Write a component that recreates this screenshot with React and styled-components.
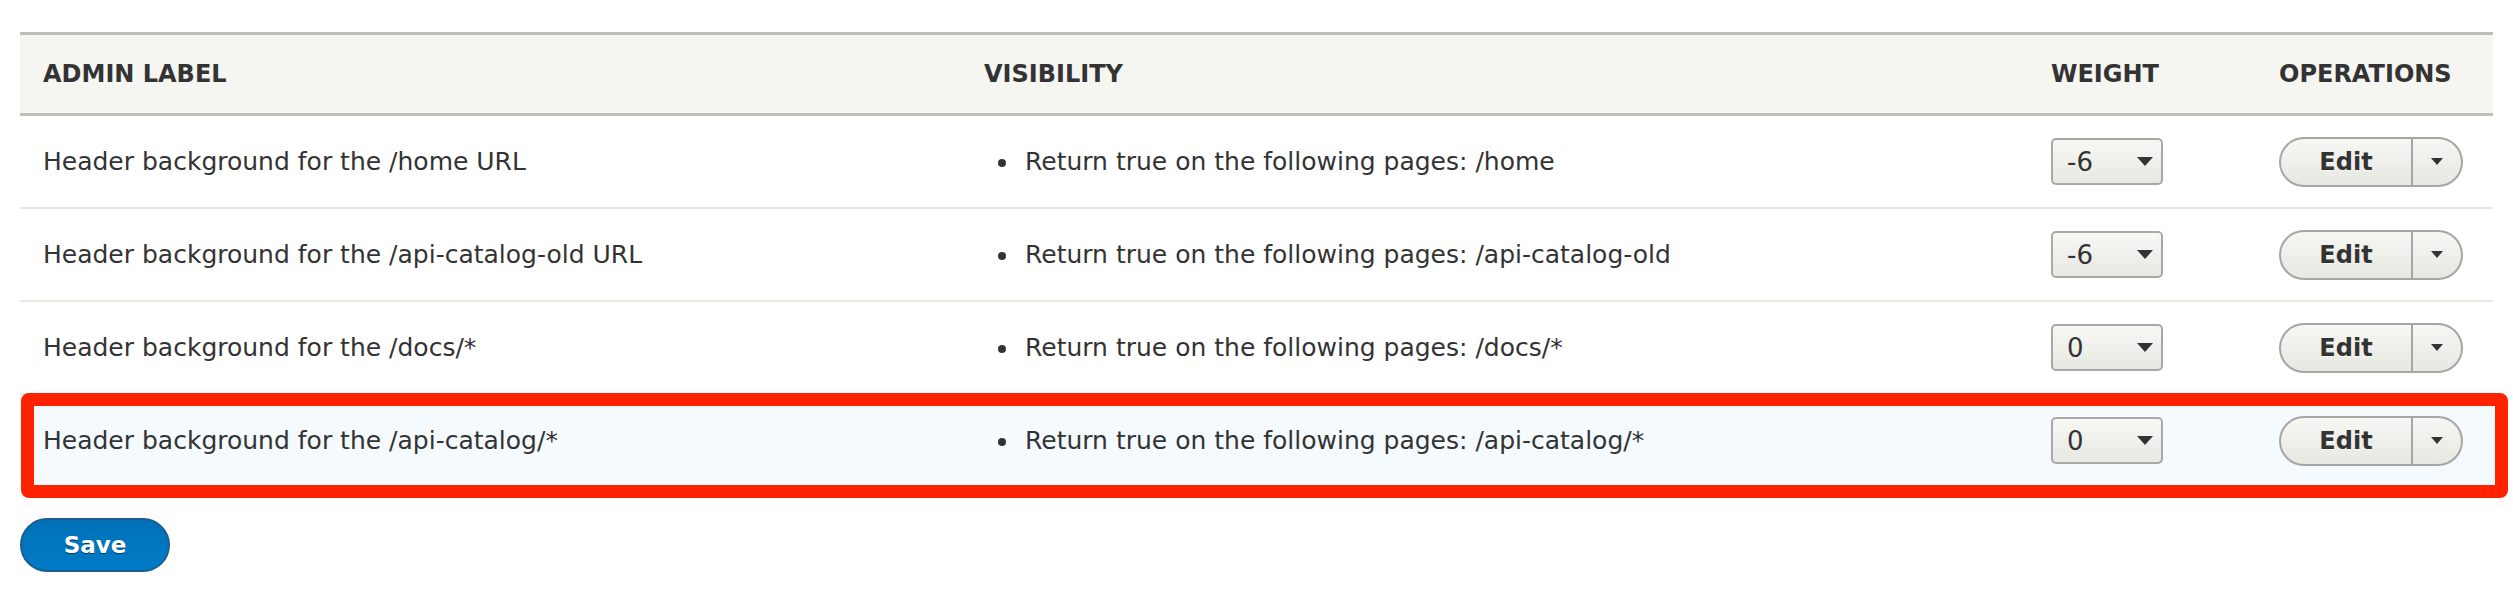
import React from "react";
import styled, { createGlobalStyle } from "styled-components";

const GlobalStyle = createGlobalStyle`
  html, body {
    margin: 0;
    padding: 0;
    background: #ffffff;
  }
  body {
    font-family: "DejaVu Sans", "Liberation Sans", sans-serif;
    color: #2f2f2f;
  }
`;

const Page = styled.div`
  padding: 32px 20px 0 20px;
`;

const Table = styled.div`
  width: 100%;
`;

const columns = "941px 1067px 228px 1fr";

const HeaderRow = styled.div`
  display: grid;
  grid-template-columns: ${columns};
  align-items: center;
  height: 78px;
  background: #f5f5f2;
  border-top: 3px solid #bfbfba;
  border-bottom: 3px solid #bfbfba;
`;

const HeaderCell = styled.div`
  padding-left: 23px;
  font-size: 24px;
  font-weight: bold;
  text-transform: uppercase;
  color: #333333;
`;

const Row = styled.div`
  position: relative;
  display: grid;
  grid-template-columns: ${columns};
  align-items: center;
  height: 91px;
  border-bottom: 2px solid #e8e7e2;
  background: ${(props) => (props.$highlight ? "#f5fafe" : "#ffffff")};
`;

const Cell = styled.div`
  padding-left: 23px;
  font-size: 25px;
  color: #333333;
`;

const Bullet = styled.div`
  position: relative;
  padding-left: 41px;

  &::before {
    content: "";
    position: absolute;
    left: 14px;
    top: 50%;
    width: 8px;
    height: 8px;
    margin-top: -3px;
    border-radius: 50%;
    background: #333333;
  }
`;

const Select = styled.div`
  box-sizing: border-box;
  display: flex;
  align-items: center;
  justify-content: space-between;
  width: 112px;
  height: 47px;
  padding: 0 8px 0 14px;
  border: 2px solid #a8a8a8;
  border-radius: 5px;
  background: linear-gradient(to bottom, #f7f7f4, #e8e8e3);
  font-size: 26px;
  color: #333333;
`;

const Caret = styled.span`
  width: 0;
  height: 0;
  border-left: ${(props) => props.$size}px solid transparent;
  border-right: ${(props) => props.$size}px solid transparent;
  border-top: ${(props) => Math.round(props.$size * 1.1)}px solid #333333;
`;

const SplitButton = styled.div`
  box-sizing: border-box;
  display: flex;
  width: 184px;
  height: 50px;
  border: 2px solid #a6a6a6;
  border-radius: 26px;
  overflow: hidden;
  background: linear-gradient(to bottom, #f6f6f3, #e8e8e2);
`;

const EditPart = styled.div`
  display: flex;
  align-items: center;
  justify-content: center;
  width: 130px;
  border-right: 2px solid #a6a6a6;
  font-size: 24px;
  font-weight: bold;
  color: #333333;
  text-shadow: 0 1px rgba(255, 255, 255, 0.6);
`;

const TogglePart = styled.div`
  flex: 1;
  display: flex;
  align-items: center;
  justify-content: center;
`;

const Annotation = styled.div`
  position: absolute;
  top: -2px;
  left: 1px;
  right: -15px;
  bottom: -12px;
  border: 13px solid #ff2200;
  border-radius: 8px;
  pointer-events: none;
`;

const Actions = styled.div`
  padding-top: 30px;
`;

const SaveButton = styled.button`
  box-sizing: border-box;
  width: 150px;
  height: 54px;
  border: 2px solid #1e5c90;
  border-radius: 28px;
  background: linear-gradient(to top, #007bc6, #0071b8);
  font-family: "DejaVu Sans", sans-serif;
  font-size: 23px;
  font-weight: bold;
  color: #ffffff;
  text-shadow: 0 1px rgba(0, 0, 0, 0.5);
`;

const blocks = [
  { label: "Header background for the /home URL", page: "/home", weight: "-6" },
  { label: "Header background for the /api-catalog-old URL", page: "/api-catalog-old", weight: "-6" },
  { label: "Header background for the /docs/*", page: "/docs/*", weight: "0" },
  { label: "Header background for the /api-catalog/*", page: "/api-catalog/*", weight: "0", marked: true },
];

export default function App() {
  return (
    <Page>
      <GlobalStyle />
      <Table>
        <HeaderRow>
          <HeaderCell>Admin label</HeaderCell>
          <HeaderCell>Visibility</HeaderCell>
          <HeaderCell>Weight</HeaderCell>
          <HeaderCell>Operations</HeaderCell>
        </HeaderRow>
        {blocks.map((b) => (
          <Row key={b.label} $highlight={b.marked}>
            <Cell>{b.label}</Cell>
            <Cell>
              <Bullet>Return true on the following pages: {b.page}</Bullet>
            </Cell>
            <Cell>
              <Select>
                <span>{b.weight}</span>
                <Caret $size={8} />
              </Select>
            </Cell>
            <Cell>
              <SplitButton>
                <EditPart>Edit</EditPart>
                <TogglePart>
                  <Caret $size={6} />
                </TogglePart>
              </SplitButton>
            </Cell>
            {b.marked && <Annotation />}
          </Row>
        ))}
      </Table>
      <Actions>
        <SaveButton>Save</SaveButton>
      </Actions>
    </Page>
  );
}
